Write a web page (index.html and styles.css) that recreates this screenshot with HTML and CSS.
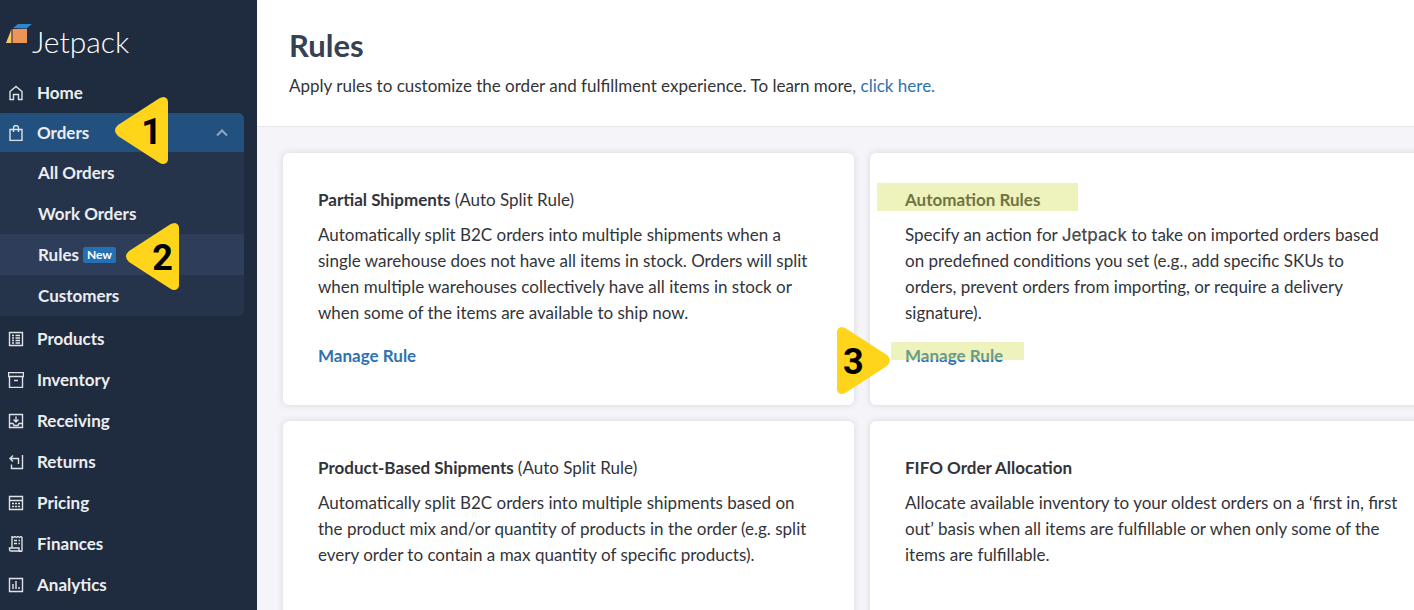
FILE: index.html
```
<!DOCTYPE html>
<html lang="en">
<head>
<meta charset="utf-8">
<title>Rules - Jetpack</title>
<link rel="stylesheet" href="styles.css">
</head>
<body>
<div class="app">
  <aside class="sidebar">
    <a class="brand" href="#">
      <svg class="brand-mark" width="26" height="20" viewBox="0 0 26 20" aria-hidden="true">
        <path d="M7 4 12 0H26L20.500 4.500Z" fill="#2f86cf"/>
        <path d="M5.500 5V19H0Z" fill="#fbc75c"/>
        <path d="M5.500 5H7V19H5.500Z" fill="#85604a"/>
        <path d="M7 5H21V19H7Z" fill="#eb9658"/>
      </svg>
      <span class="brand-name">Jetpack</span>
    </a>
    <nav>
      <a class="item" href="#">
        <svg class="icon" viewBox="0 0 16 16" aria-hidden="true"><path d="M2 14.500V6.500L8 1.500l6 5v8h-3.500V9.500h-5v5Z"/></svg>
        Home
      </a>
      <div class="group">
        <button class="item open" type="button" aria-expanded="true">
          <svg class="icon" viewBox="0 0 16 16" aria-hidden="true"><path d="M2 4.500h12v11H2ZM5.500 7V3a2.500 2.500 0 0 1 5 0v4"/></svg>
          Orders
          <svg class="chevron" width="12" height="8" viewBox="0 0 12 8" aria-hidden="true"><path d="M1 6.500 6 1.500l5 5"/></svg>
        </button>
        <div class="callout callout-left first">
          <svg width="53" height="67" viewBox="0 0 53 67" aria-hidden="true"><path d="M3 28 44 1.500Q46 0 49 0Q53 1 53 5V62Q53 66 49 67Q46 67 44 65.500L3 39Q-3 33.500 3 28Z"/></svg>
          <span>1</span>
        </div>
      </div>
      <div class="submenu">
        <a class="subitem" href="#">All Orders</a>
        <a class="subitem" href="#">Work Orders</a>
        <div class="group">
          <a class="subitem current" href="#">Rules <span class="badge">New</span></a>
          <div class="callout callout-left second">
            <svg width="53" height="67" viewBox="0 0 53 67" aria-hidden="true"><path d="M3 28 44 1.500Q46 0 49 0Q53 1 53 5V62Q53 66 49 67Q46 67 44 65.500L3 39Q-3 33.500 3 28Z"/></svg>
            <span>2</span>
          </div>
        </div>
        <a class="subitem" href="#">Customers</a>
      </div>
      <a class="item" href="#">
        <svg class="icon" viewBox="0 0 16 16" aria-hidden="true"><path d="M1.500 1.500h13v13h-13ZM4 4.500h2M7.500 4.500H12M4 7h2M7.500 7H12M4 9.500h2M7.500 9.500H12M4 12h2M7.500 12H12"/></svg>
        Products
      </a>
      <a class="item" href="#">
        <svg class="icon" viewBox="0 0 16 16" aria-hidden="true"><path d="M.5.500h15v4H.500ZM1.500 4.500v11h13v-11M6 8.500h4"/></svg>
        Inventory
      </a>
      <a class="item" href="#">
        <svg class="icon" viewBox="0 0 16 16" aria-hidden="true"><path d="M1.500 1.500h13v13h-13ZM8 3.500v5M5.500 6.500 8 9l2.500-2.500M1.500 10.500H5l1 2h4l1-2h3.500"/></svg>
        Receiving
      </a>
      <a class="item" href="#">
        <svg class="icon" viewBox="0 0 16 16" aria-hidden="true"><path d="M5 1.500 2 4.500l3 3M2 4.500h8.500V10M14.500 1v13.500h-11v-4"/></svg>
        Returns
      </a>
      <a class="item" href="#">
        <svg class="icon" viewBox="0 0 16 16" aria-hidden="true"><path d="M1.500 1.500h13v13h-13ZM1.500 5.500h13M4 8.500h2M7 8.500h2M10 8.500h2M4 11.500h2M7 11.500h2M10 11.500h2"/></svg>
        Pricing
      </a>
      <a class="item" href="#">
        <svg class="icon" viewBox="0 0 16 16" aria-hidden="true"><path d="M4 12V.500l1.500 1L7 .500l1.500 1 1.500-1 1.500 1 1.500-1 1 1V14.500a1 1 0 0 1-3 0V12H1.500v1.500q0 1.500 1.500 1.500h10M6 4.500h3M10.500 4.500H12M6 7.500h3M10.500 7.500H12"/></svg>
        Finances
      </a>
      <a class="item" href="#">
        <svg class="icon" viewBox="0 0 16 16" aria-hidden="true"><path d="M1.500 1.500h13v13h-13ZM5 7v5M8 4v8M11 10v2"/></svg>
        Analytics
      </a>
    </nav>
  </aside>
  <main class="main">
    <header class="header">
      <h1>Rules</h1>
      <p>Apply rules to customize the order and fulfillment experience. To learn more, <a href="#">click here.</a></p>
    </header>
    <div class="cards">
      <section class="card">
        <h2>Partial Shipments <span>(Auto Split Rule)</span></h2>
        <p>Automatically split B2C orders into multiple shipments when a<br>single warehouse does not have all items in stock. Orders will split<br>when multiple warehouses collectively have all items in stock or<br>when some of the items are available to ship now.</p>
        <a class="manage" href="#">Manage Rule</a>
      </section>
      <section class="card">
        <h2 class="marked mark-title">Automation Rules</h2>
        <p>Specify an action for <span class="product">Jetpack</span> to take on imported orders based<br>on predefined conditions you set (e.g., add specific SKUs to<br>orders, prevent orders from importing, or require a delivery<br>signature).</p>
        <a class="manage marked mark-link" href="#">Manage Rule</a>
        <div class="callout callout-right">
          <svg width="53" height="67" viewBox="0 0 53 67" aria-hidden="true"><path d="M50 28 9 1.500Q7 0 4 0Q0 1 0 5V62Q0 66 4 67Q7 67 9 65.500L50 39Q56 33.500 50 28Z"/></svg>
          <span>3</span>
        </div>
      </section>
      <section class="card">
        <h2>Product-Based Shipments <span>(Auto Split Rule)</span></h2>
        <p>Automatically split B2C orders into multiple shipments based on<br>the product mix and/or quantity of products in the order (e.g. split<br>every order to contain a max quantity of specific products).</p>
      </section>
      <section class="card">
        <h2>FIFO Order Allocation</h2>
        <p>Allocate available inventory to your oldest orders on a ‘first in, first<br>out’ basis when all items are fulfillable or when only some of the<br>items are fulfillable.</p>
      </section>
    </div>
  </main>
</div>
</body>
</html>
```
FILE: styles.css
```
* { box-sizing: border-box; }

body {
  margin: 0;
  background: #f4f4f9;
  color: #333439;
  font: 17px/26px Lato, "Open Sans", sans-serif;
}

h1, h2, p { margin: 0; }
a { color: #2e72b0; text-decoration: none; }

.app { display: flex; height: 100vh; overflow: hidden; }

/* Sidebar */
.sidebar {
  flex: none;
  width: 257px;
  background: #1f2b3e;
}

.brand {
  display: flex;
  height: 72px;
  padding: 24px 0 0 6px;
  color: #fff;
}

.brand-name {
  font-size: 30px;
  line-height: 34px;
  font-weight: 300;
}

.item {
  display: flex;
  align-items: center;
  gap: 13px;
  width: 244px;
  height: 41px;
  padding: 0 16px 0 8px;
  border: 0;
  background: none;
  color: #eceef1;
  font: inherit;
  font-weight: 700;
}

.item.open {
  height: 39px;
  background: #225180;
  border-top-right-radius: 6px;
}

.icon, .chevron {
  flex: none;
  fill: none;
  stroke: #dfe2e7;
  stroke-width: 1.4;
}

.icon { width: 16px; height: 16px; }
.chevron { margin-left: auto; stroke: #90a8c0; stroke-width: 2; }

.submenu {
  width: 244px;
  margin-bottom: 2px;
  background: #26344b;
  border-bottom-right-radius: 6px;
}

.subitem {
  display: flex;
  align-items: center;
  gap: 4px;
  height: 41px;
  padding-left: 38px;
  color: #eceef1;
  font-weight: 700;
}

.subitem.current { background: #2e3e5a; }

.badge {
  padding: 0 4px;
  border-radius: 2px;
  background: #2470b3;
  color: #fff;
  font-size: 12px;
  line-height: 16px;
}

/* Numbered callouts */
.group, .card, .marked { position: relative; }

.callout {
  position: absolute;
  z-index: 2;
  width: 53px;
  height: 67px;
  color: #000;
  font: 700 36px/70px Roboto, sans-serif;
}

.callout svg { display: block; fill: #ffd51b; }
.callout span { position: absolute; top: 0; }
.callout-left span { right: 6px; }
.callout-right span { left: 6px; }
.callout.first { left: 115px; top: -16px; }
.callout.second { left: 126px; top: -11px; }
.callout-right { left: -33px; top: 174px; }

/* Content */
.main {
  flex: 1;
  min-width: 0;
  overflow: hidden auto;
  scrollbar-width: none;
}

.header {
  height: 127px;
  padding: 27px 32px 0;
  background: #fff;
  border-bottom: 1px solid #e6e6ea;
}

.header h1 {
  margin-bottom: 10px;
  color: #364153;
  font-size: 31px;
  line-height: 36px;
}

/* The second column runs past the window's right edge */
.cards {
  display: grid;
  grid-template-columns: 1fr 1fr;
  grid-auto-rows: 1fr;
  gap: 16px;
  margin: 26px -27px 0 26px;
}

.card {
  padding: 34px 0 36px 35px;
  background: #fff;
  border-radius: 6px;
  box-shadow: 0 0 6px #d5d5dc;
  white-space: nowrap;
}

.card h2 {
  width: fit-content;
  margin-bottom: 9px;
  font-size: 17px;
  line-height: 26px;
}

.card h2 span { font-weight: 400; }
.card p { margin-bottom: 17px; }
.manage { display: block; width: fit-content; font-weight: 700; }

.product { color: #4a4b50; font-family: Inter, sans-serif; font-weight: 500; line-height: 20px; }

/* Highlighter strokes */
.marked::after {
  content: "";
  position: absolute;
  background: rgba(210, 221, 80, .38);
}

.mark-title::after { left: -28px; right: -38px; top: -4px; height: 28px; }
.mark-link::after { left: -14px; right: -21px; top: -1px; height: 18px; }
```
